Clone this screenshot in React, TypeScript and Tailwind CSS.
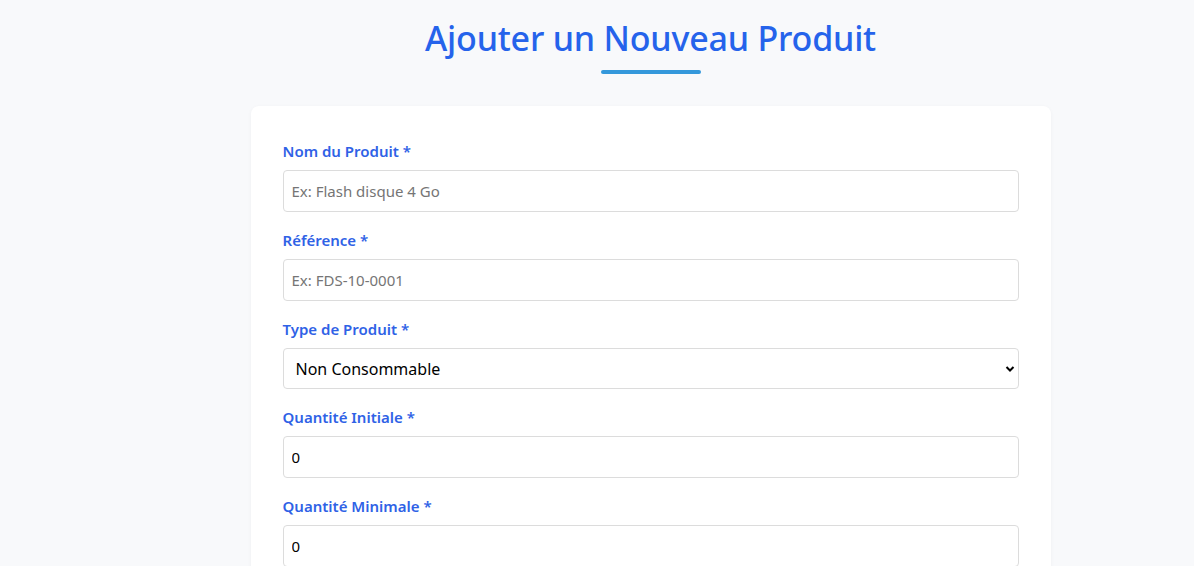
import React from "react";

const font = { fontFamily: '"Noto Sans", "Open Sans", sans-serif' };

function Label({ children }: { children: React.ReactNode }) {
  return (
    <label className="block text-[15px] font-semibold leading-[22px] text-[#2f62e6] mb-2">
      {children}
    </label>
  );
}

export default function App() {
  return (
    <div className="min-h-[566px] bg-[#f8f9fb] overflow-hidden pl-[107px]" style={font}>
      <div className="flex flex-col items-center pt-[14px]">
        <h1 className="text-[34px] leading-[48px] font-medium text-[#2563eb] tracking-[-0.2px]">
          Ajouter un Nouveau Produit
        </h1>
        <div className="mt-[8px] h-[4px] w-[100px] rounded-full bg-[#3498db]" />
      </div>
      <div className="mx-auto mt-[32px] w-[800px] rounded-lg bg-white px-8 pt-[34px] pb-8 shadow-[0_1px_4px_rgba(0,0,0,0.04)]">
        <div className="flex flex-col gap-[17px]">
          <div>
            <Label>Nom du Produit *</Label>
            <input
              className="block h-[42px] w-full rounded border border-[#dcdcdc] px-2 text-[15px] placeholder:text-[#757575] outline-none"
              placeholder="Ex: Flash disque 4 Go"
            />
          </div>
          <div>
            <Label>Référence *</Label>
            <input
              className="block h-[42px] w-full rounded border border-[#dcdcdc] px-2 text-[15px] placeholder:text-[#757575] outline-none"
              placeholder="Ex: FDS-10-0001"
            />
          </div>
          <div>
            <Label>Type de Produit *</Label>
            <div className="relative">
              <select
                className="block h-[41px] w-full appearance-none rounded border border-[#dcdcdc] bg-white px-3 text-[16px] text-black outline-none"
                defaultValue="nc"
              >
                <option value="nc">Non Consommable</option>
                <option value="c">Consommable</option>
              </select>
              <svg
                className="pointer-events-none absolute right-[4px] top-1/2 -translate-y-1/2"
                width="10"
                height="8"
                viewBox="0 0 10 8"
              >
                <path d="M1.5 2 L5 5.5 L8.5 2" stroke="black" strokeWidth="2" fill="none" />
              </svg>
            </div>
          </div>
          <div>
            <Label>Quantité Initiale *</Label>
            <input
              type="number"
              defaultValue={0}
              className="block h-[42px] w-full rounded border border-[#dcdcdc] px-2 text-[15px] text-black outline-none"
            />
          </div>
          <div>
            <Label>Quantité Minimale *</Label>
            <input
              type="number"
              defaultValue={0}
              className="block h-[42px] w-full rounded border border-[#dcdcdc] px-2 text-[15px] text-black outline-none"
            />
          </div>
        </div>
      </div>
    </div>
  );
}
